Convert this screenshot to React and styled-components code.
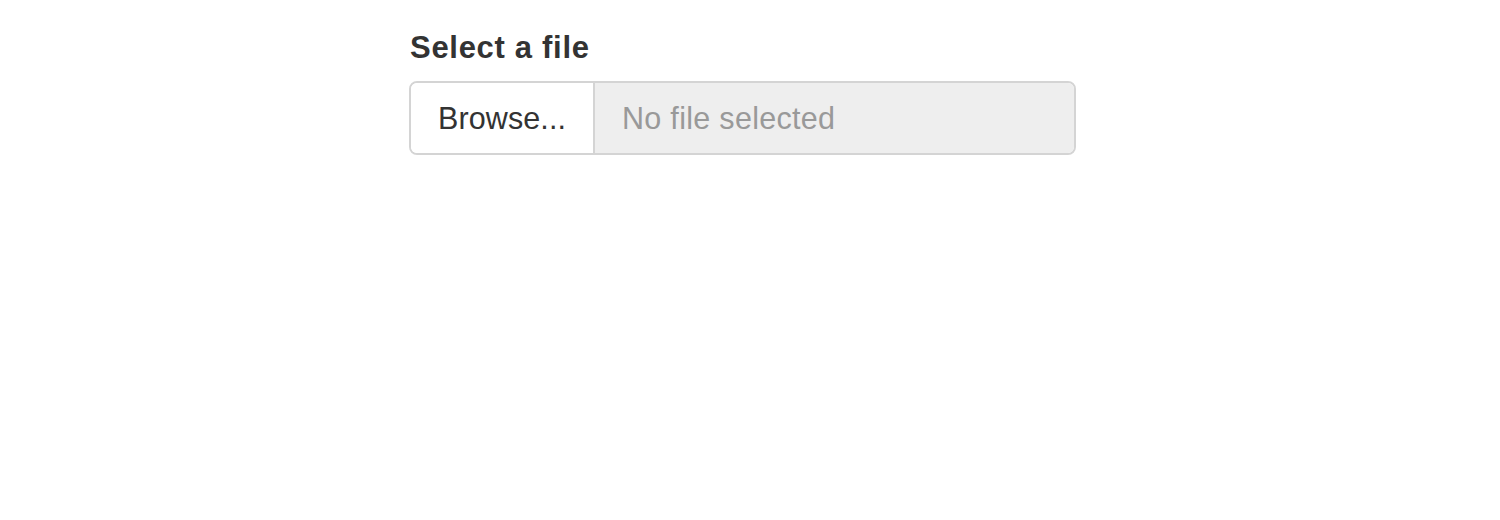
import styled, { createGlobalStyle } from "styled-components";

const GlobalStyle = createGlobalStyle`
  body {
    margin: 0;
    background: #fff;
    font-family: "Liberation Sans", Arial, sans-serif;
    color: #333;
  }
`;

const Page = styled.div`
  padding: 26px 0 0 409px;
`;

const FormGroup = styled.div`
  width: 667px;
  display: flex;
  flex-direction: column;
`;

const Label = styled.label`
  font-size: 31px;
  font-weight: 700;
  line-height: 43px;
  margin: 0 0 12px 1px;
  letter-spacing: 0.7px;
  color: #333;
`;

const InputGroup = styled.div`
  display: flex;
  height: 74px;
  border: 2px solid #d4d4d4;
  border-radius: 8px;
  overflow: hidden;
  box-sizing: border-box;
`;

const BrowseButton = styled.span`
  display: flex;
  align-items: center;
  width: 184px;
  padding: 0 0 0 27px;
  box-sizing: border-box;
  background: #fff;
  border-right: 2px solid #d4d4d4;
  font-size: 30.5px;
  letter-spacing: 0.1px;
  color: #333;
`;

const FileName = styled.span`
  flex: 1;
  display: flex;
  align-items: center;
  padding-left: 27px;
  background: #eee;
  font-size: 30.5px;
  letter-spacing: 0.3px;
  color: #999;
`;

export default function App() {
  return (
    <>
      <GlobalStyle />
      <Page>
        <FormGroup>
          <Label>Select a file</Label>
          <InputGroup>
            <BrowseButton>Browse...</BrowseButton>
            <FileName>No file selected</FileName>
          </InputGroup>
        </FormGroup>
      </Page>
    </>
  );
}
